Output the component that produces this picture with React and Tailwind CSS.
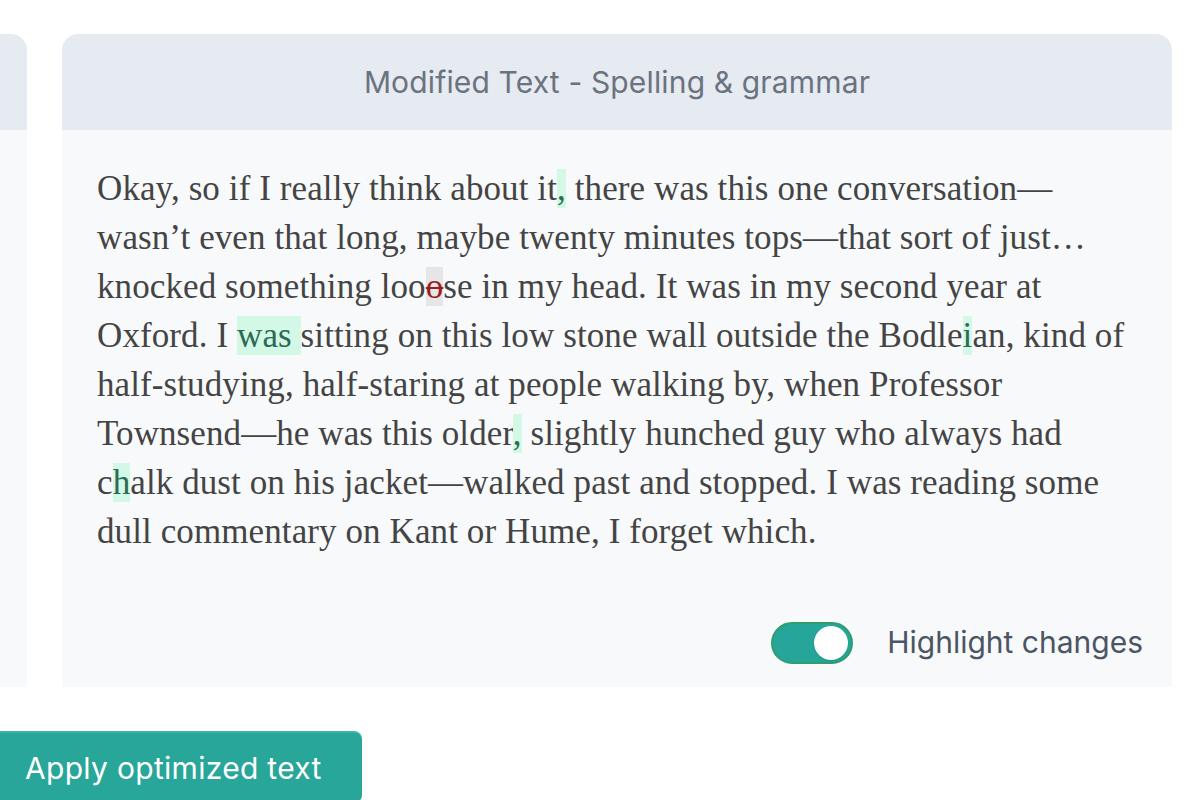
import React, { useState } from 'react';

const serif = { fontFamily: '"Liberation Serif", "DejaVu Serif", serif' };

const Ins = ({ children }) => (
    <span className="bg-[#d3f8e6] text-[#2b6a55]">{children}</span>
);

const Del = ({ children }) => (
    <span className="bg-[#e6e6e6] text-[#9b1c1c] line-through decoration-2">{children}</span>
);

const App = () => {
    const [highlight, setHighlight] = useState(true);

    return (
        <div className="w-[1200px] h-[800px] bg-white overflow-hidden font-['Inter',sans-serif]">
            <div className="flex gap-[35px] pt-[34px]">
                {/* Original (cut off) */}
                <div className="w-[27px] h-[653px] flex flex-col shrink-0">
                    <div className="h-[96px] bg-[#e6eaf1] rounded-tr-2xl" />
                    <div className="flex-1 bg-[#f8f9fb]" />
                </div>

                {/* Modified */}
                <div className="w-[1110px] h-[653px] flex flex-col shrink-0">
                    <div className="h-[96px] bg-[#e6eaf1] rounded-t-2xl flex items-center justify-center">
                        <h2 className="text-[30px] tracking-[0.15px] text-[#6b7280]">Modified Text - Spelling &amp; grammar</h2>
                    </div>
                    <div className="flex-1 bg-[#f8f9fb] flex flex-col pl-[35px] pr-[29px] pt-[34px] pb-[22px]">
                        <p style={serif} className="text-[35px] leading-[49px] tracking-[0.1px] text-[#444444] whitespace-nowrap">
                            Okay, so if I really think about it<Ins>,</Ins> there was this one conversation—<br />
                            wasn’t even that long, maybe twenty minutes tops—that sort of just…<br />
                            knocked something loo<Del>o</Del>se in my head. It was in my second year at<br />
                            Oxford. I <Ins>was </Ins>sitting on this low stone wall outside the Bodle<Ins>i</Ins>an, kind of<br />
                            half-studying, half-staring at people walking by, when Professor<br />
                            Townsend—he was this older<Ins>,</Ins> slightly hunched guy who always had<br />
                            c<Ins>h</Ins>alk dust on his jacket—walked past and stopped. I was reading some<br />
                            dull commentary on Kant or Hume, I forget which.
                        </p>
                        <div className="mt-auto flex items-center justify-end gap-[34px]">
                            <button
                                onClick={() => setHighlight((v) => !v)}
                                className={`w-[82px] h-[42px] rounded-full border-2 flex items-center px-[3px] ${highlight ? 'bg-[#26a69a] border-[#2f9d6e] justify-end' : 'bg-gray-300 border-gray-300 justify-start'}`}
                            >
                                <span className="w-[34px] h-[34px] rounded-full bg-white shadow-sm" />
                            </button>
                            <span className="text-[30px] text-[#4b5563]">Highlight changes</span>
                        </div>
                    </div>
                </div>
            </div>

            <div className="mt-[44px]">
                <button className="ml-[-10px] w-[372px] h-[72px] bg-[#27a699] rounded-lg border-t-2 border-[#3cb3a7] text-white text-[30px] text-left pl-[35px] tracking-[0.3px]">
                    Apply optimized text
                </button>
            </div>
        </div>
    );
};

export default App;
